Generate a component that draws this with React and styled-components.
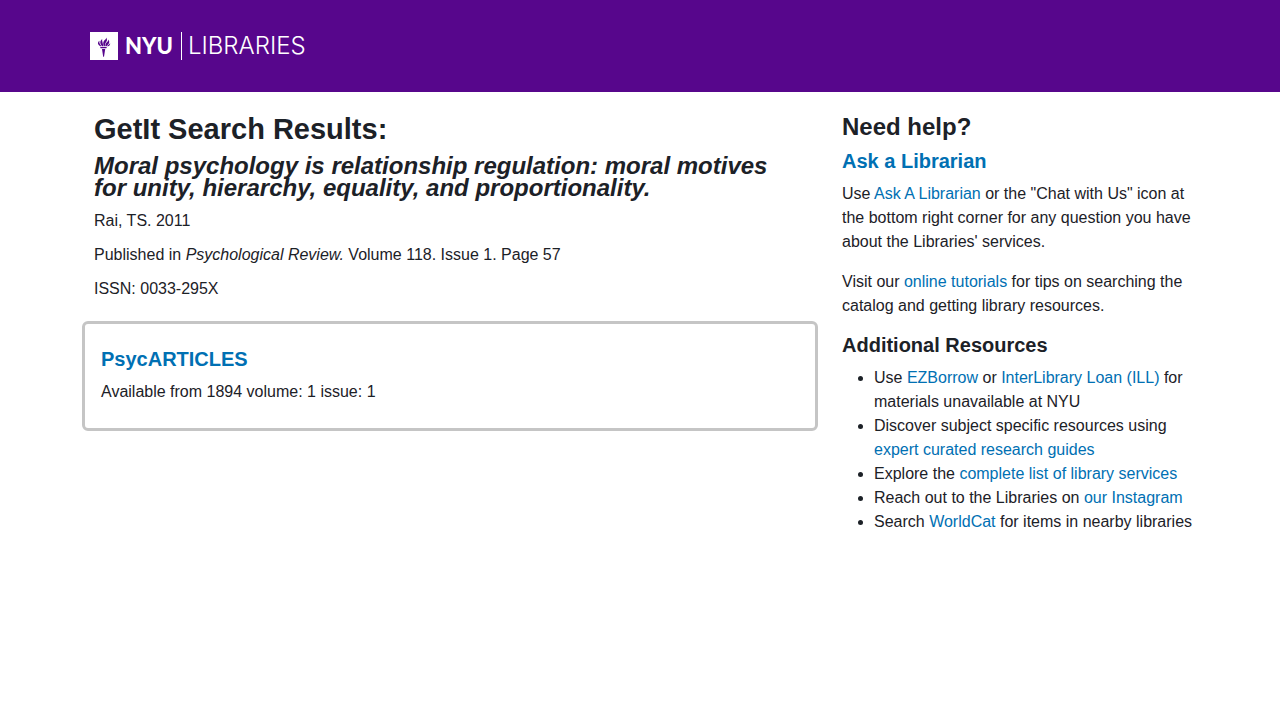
import React from "react";
import styled, { createGlobalStyle } from "styled-components";

const GlobalStyle = createGlobalStyle`
  *, *::before, *::after { box-sizing: border-box; }
  body {
    margin: 0;
    background: #fff;
    color: #1c2127;
    font-family: "Liberation Sans", Helvetica, Arial, sans-serif;
    font-size: 16px;
    line-height: 24px;
  }
`;

const Container = styled.div`
  max-width: 1140px;
  margin: 0 auto;
  padding: 0 12px;
`;

const Header = styled.header`
  background: #57068c;
  padding: 32px 0;
`;

const Logo = styled.a`
  display: flex;
  align-items: center;
  width: max-content;
  margin-left: 8px;
  color: #fff;
  text-decoration: none;
  line-height: 28px;
`;

const TorchIcon = styled.svg`
  display: block;
  width: 28px;
  height: 28px;
`;

const University = styled.span`
  margin-left: 7px;
  font-family: Lato, "Liberation Sans", sans-serif;
  font-size: 22px;
  font-weight: 900;
`;

const Unit = styled.span`
  margin-left: 8px;
  padding-left: 6px;
  border-left: 1px solid #fff;
  font-family: Inter, "Liberation Sans", sans-serif;
  font-size: 24px;
  font-weight: 300;
`;

const Columns = styled(Container)`
  display: grid;
  grid-template-columns: minmax(0, 2fr) minmax(0, 1fr);
  padding: 0;

  @media (max-width: 767px) {
    grid-template-columns: minmax(0, 1fr);
  }
`;

const Main = styled.main`
  padding: 20px 12px;
`;

const Citation = styled.section`
  padding: 0 12px;
`;

const PageTitle = styled.h1`
  margin: 0 0 8px;
  font-size: 29px;
  line-height: 35px;
`;

const ArticleTitle = styled.h2`
  margin: 0 0 10px;
  font-size: 24px;
  line-height: 22px;
  font-style: italic;
`;

const Detail = styled.p`
  margin: 0 0 10px;
`;

const ResultCard = styled.article`
  margin-top: 20px;
  padding: 24px 16px;
  border: 3px solid #c5c5c5;
  border-radius: 6px;
`;

const Sidebar = styled.aside`
  padding: 20px 12px;
`;

const HelpTitle = styled.h2`
  margin: 0 0 8px;
  font-size: 24px;
  line-height: 30px;
`;

const Subheading = styled.h3`
  margin: 0 0 10px;
  font-size: 20px;
  line-height: 22px;
`;

const Paragraph = styled.p`
  margin: 0 0 16px;
`;

const ResourceList = styled.ul`
  margin: 0;
  padding-left: 32px;
`;

const Link = styled.a`
  color: #0070b3;
  text-decoration: none;

  &:hover { text-decoration: underline; }
`;

function Torch() {
  return (
    <TorchIcon viewBox="0 0 28 28" aria-hidden="true">
      <rect width="28" height="28" fill="#fff" />
      <g fill="#57068c">
        <path d="M10.200 14.900h6.600l-.4 1.300h-5.800z" />
        <path d="M12 17h3.200l-1.200 7.800h-.8z" />
        <path d="M10.300 14.300C7.300 12.500 7.400 10.300 9.500 8.800c-.6 2 .3 3.300 2 5.500z" />
        <path d="M12 14.300c-2.500-3.300-2-5.500.2-7.300-.4 2 .7 3.600 1.100 7.300z" />
        <path d="M13.700 14.300c-1-3.700-.4-5.300 1.400-6.600.8-.5 1.100-1.200 1-2.100 1.600 2.300.8 3.800-.4 5.200-.6.900-.8 1.800-.8 3.500z" />
        <path d="M15.300 14.300c0-2.300.6-3 1.900-4.200.8-.8 1.200-1.700 1.100-2.700 1.700 2.300.9 4-.5 5.300-.6.500-.9 1-1.200 1.600z" />
        <path d="M17 14.300c.5-1.200 2.600-1.600 3.100-3.300.3 1.800-.8 3-2.200 3.300z" />
      </g>
    </TorchIcon>
  );
}

export default function App() {
  return (
    <>
      <GlobalStyle />
      <Header>
        <Container>
          <Logo href="#" aria-label="NYU Libraries">
            <Torch />
            <University>NYU</University>
            <Unit>LIBRARIES</Unit>
          </Logo>
        </Container>
      </Header>
      <Columns>
        <Main>
          <Citation>
            <PageTitle>GetIt Search Results:</PageTitle>
            <ArticleTitle>
              Moral psychology is relationship regulation: moral motives for
              unity, hierarchy, equality, and proportionality.
            </ArticleTitle>
            <Detail>Rai, TS. 2011</Detail>
            <Detail>
              Published in <em>Psychological Review.</em> Volume 118. Issue 1.
              Page 57
            </Detail>
            <Detail>ISSN: 0033-295X</Detail>
          </Citation>
          <ResultCard>
            <Subheading>
              <Link href="#">PsycARTICLES</Link>
            </Subheading>
            <div>Available from 1894 volume: 1 issue: 1</div>
          </ResultCard>
        </Main>
        <Sidebar>
          <HelpTitle>Need help?</HelpTitle>
          <Subheading>
            <Link href="#">Ask a Librarian</Link>
          </Subheading>
          <Paragraph>
            Use <Link href="#">Ask A Librarian</Link> or the "Chat with Us" icon
            at the bottom right corner for any question you have about the
            Libraries' services.
          </Paragraph>
          <Paragraph>
            Visit our <Link href="#">online tutorials</Link> for tips on
            searching the catalog and getting library resources.
          </Paragraph>
          <Subheading>Additional Resources</Subheading>
          <ResourceList>
            <li>
              Use <Link href="#">EZBorrow</Link> or{" "}
              <Link href="#">InterLibrary Loan (ILL)</Link> for materials
              unavailable at NYU
            </li>
            <li>
              Discover subject specific resources using{" "}
              <Link href="#">expert curated research guides</Link>
            </li>
            <li>
              Explore the <Link href="#">complete list of library services</Link>
            </li>
            <li>
              Reach out to the Libraries on <Link href="#">our Instagram</Link>
            </li>
            <li>
              Search <Link href="#">WorldCat</Link> for items in nearby
              libraries
            </li>
          </ResourceList>
        </Sidebar>
      </Columns>
    </>
  );
}
